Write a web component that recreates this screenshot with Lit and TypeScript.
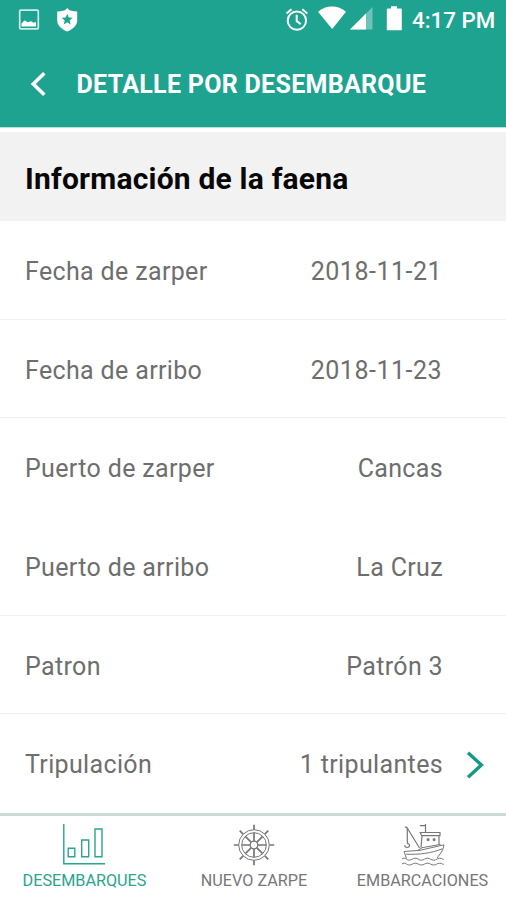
import { LitElement, html, css, svg, nothing } from "lit";
import { customElement } from "lit/decorators.js";
import { classMap } from "lit/directives/class-map.js";

interface Row { label: string; value: string; divider: boolean; link?: boolean; numeric?: boolean }

const rows: Row[] = [
  { label: "Fecha de zarper", value: "2018-11-21", divider: true, numeric: true },
  { label: "Fecha de arribo", value: "2018-11-23", divider: true, numeric: true },
  { label: "Puerto de zarper", value: "Cancas", divider: false },
  { label: "Puerto de arribo", value: "La Cruz", divider: true },
  { label: "Patron", value: "Patrón 3", divider: true },
  { label: "Tripulación", value: "1 tripulantes", divider: false, link: true },
];

@customElement("status-bar")
class StatusBar extends LitElement {
  static styles = css`
    :host { display: flex; align-items: center; height: 40px; padding: 0 12px 0 18px; color: #fff; }
    svg { display: block; flex: none; }
    .shield { margin-left: 17px; }
    .alarm { margin-left: auto; }
    .wifi { margin-left: 9px; }
    .signal { margin-left: 4px; }
    .battery { margin-left: 13px; }
    .time { margin-left: 9px; width: 82px; font: 500 22.3px/40px Roboto, sans-serif; white-space: nowrap; }
  `;
  render() {
    return html`
      <svg width="22" height="40" viewBox="18 0 22 40">
        <rect x="19.7" y="10.2" width="18.6" height="18.6" rx="1" fill="none" stroke="#fff" stroke-opacity=".8" stroke-width="1.7" />
        <path d="M21.5 26.5v-3l3-3.2 3.2 2 3.3-1.1 2.6 1.6 2.4-.8v4.5z" fill="#fff" />
      </svg>
      <svg class="shield" width="21" height="40" viewBox="57 0 21 40">
        <path fill-rule="evenodd" fill="#fff" d="M67.2 8l2.2 2.2 4.6 1 3.2.3v9.3c0 4.8-5 8.8-10 10.8-5-2-10-6-10-10.8v-9.3l3.4-.3 4.4-1zM67.2 13.8l-1.5 3.7-4 .3 3 2.6-.9 4 3.4-2.1 3.4 2.1-.9-4 3-2.6-4-.3z" />
      </svg>
      <svg class="alarm" width="24" height="40" viewBox="284.5 0 24 40">
        <g fill="none" stroke="#fff" stroke-width="2">
          <circle cx="296.4" cy="20.6" r="9.2" />
          <path d="M296.2 14.8v6.3l4 3M286 13.4l5-4.2M306.8 13.4l-5-4.2" />
        </g>
      </svg>
      <svg class="wifi" width="28" height="40" viewBox="317 0 28 40">
        <path fill="#fff" d="M317 11.8C325 4.7 337 4.7 345 11.8L331.2 29z" />
      </svg>
      <svg class="signal" width="23" height="40" viewBox="349 0 23 40">
        <path fill="#fff" fill-opacity=".35" d="M349 29.5L371.5 7v22.5z" />
        <path fill="#fff" d="M349 29.5L365 13.5v16z" />
      </svg>
      <svg class="battery" width="17" height="40" viewBox="385 0 17 40">
        <path fill="#fff" d="M390 6.3h6v2.3h3.8q1 0 1 1v20.6h-15V9.6q0-1 1-1H390z" />
      </svg>
      <span class="time">4:17 PM</span>
    `;
  }
}

@customElement("detail-row")
class DetailRow extends LitElement {
  static properties = { row: { attribute: false } };
  declare row: Row;
  static styles = css`
    :host { display: block; flex: 1; }
    .row {
      box-sizing: border-box; height: 100%; display: flex; align-items: center;
      padding: 4px 21px 0 25px; border-bottom: 1px solid transparent;
      font: 400 25px/30px Roboto, sans-serif; letter-spacing: 0.35px; color: #6e6e6e;
    }
    .divided { border-bottom-color: #f2f2f2; }
    .value { margin-left: auto; }
    .numeric { letter-spacing: 0.5px; padding-right: 1px; }
    .end { width: 42px; display: flex; justify-content: flex-end; }
  `;
  render() {
    const r = this.row;
    return html`<div class=${classMap({ row: true, divided: r.divider })}>
      <span>${r.label}</span><span class=${classMap({ value: true, numeric: !!r.numeric })}>${r.value}</span>
      <span class="end">${r.link
        ? html`<svg width="19" height="28" viewBox="0 0 19 28"><path d="M2 1.7L15.4 14 2 26.3" fill="none" stroke="#129a87" stroke-width="3.4" /></svg>`
        : nothing}</span>
    </div>`;
  }
}

const spokes = [0, 45, 90, 135, 180, 225, 270, 315];

const icons = {
  chart: svg`<path d="M.8 1v39.7H42" stroke-width="1.4" />
    <path d="M5.2 25.2h6.6v8.6H5.2zM18.7 17h7v16.8h-7zM32 6h7v27.8h-7z" stroke-width="1.4" />`,
  wheel: svg`<circle cx="22" cy="22" r="15.3" /><circle cx="22" cy="22" r="12.3" /><circle cx="22" cy="22" r="3.8" stroke-width="1.3" />
    ${spokes.map(a => svg`<path d="M22 1.8v4.9M22 9.7v8.5" stroke-width="1.7" transform="rotate(${a} 22 22)" />`)}`,
  boat: svg`<path d="M4 3.8l2.3 1.5v13M5.5 3.8L18.5 25M6.5 18v2.5c3 .5 2.5 4-.3 4-1.7 0-2.5-1-2.5-2.2" stroke-width="1.2" />
    <path d="M18.8 2.6h5.6M24.5 1v8M19.3 9.5H39v3.2H20.6zM21 12.7L20 24.5M38 12.7v9" stroke-width="1.2" />
    <path d="M3 28.5l16-1.2 24-5.5c-.5 5.5-3.8 9-7 13.2M3 28.5l2.5 7M5 31.2c13 .5 25-.8 36.5-5.5M17 27.4l4-2.7 18.5-3.3" />
    <path d="M26.2 15.8h1.8v1.8h-1.8zM32.2 15.8h1.8v1.8h-1.8z" fill="currentColor" />
    <path d="M1 36c3-2.5 4.5 1.2 7.2 1.2s3.3-2 6-2 3.5 2 6.2 2 3.4-2 6.1-2 3.5 2 6.2 2 3.4-2 6.1-2 2 1 4 1.2M1 41c3-2.5 4.5 1 7.2 1s3.3-1.8 6-1.8 3.5 1.8 6.2 1.8 3.4-1.8 6.1-1.8 3.5 1.8 6.2 1.8 3.4-1.8 6.1-1.8 2 1 4 1.2" />`,
};

@customElement("tab-bar")
class TabBar extends LitElement {
  static styles = css`
    :host { display: grid; grid-template-columns: 169px 170px 167px; box-sizing: border-box; height: 87px;
      border-top: 3px solid #cadbd5; background: #fff; }
    .tab { display: flex; flex-direction: column; align-items: center; padding-top: 7px; color: #777;
      font: 400 16.2px/20px Roboto, sans-serif; white-space: nowrap; }
    .active { color: #2aa58e; }
    svg { display: block; fill: none; stroke: currentColor; stroke-width: 1; margin-bottom: 4px; }
  `;
  render() {
    const tab = (label: string, icon: unknown, active = false) => html`
      <div class=${classMap({ tab: true, active })}>
        <svg width="44" height="44" viewBox="0 0 44 44">${icon}</svg><span>${label}</span>
      </div>`;
    return html`${tab("DESEMBARQUES", icons.chart, true)}${tab("NUEVO ZARPE", icons.wheel)}${tab("EMBARCACIONES", icons.boat)}`;
  }
}

@customElement("app-root")
class AppRoot extends LitElement {
  static styles = css`
    :host { display: flex; flex-direction: column; width: 506px; height: 900px; overflow: hidden; background: #fff;
      font-family: Roboto, sans-serif; }
    .top { height: 127px; background: #1fa391; box-shadow: 0 1px 0 #b9e0da; }
    .bar { display: flex; align-items: center; box-sizing: border-box; height: 87px; padding: 3px 0 0 30px; color: #fff; }
    .bar svg { margin-top: -2px; }
    .title { margin: 0 0 0 29.5px; font: 700 25px/30px Roboto, sans-serif; letter-spacing: 0.3px; white-space: nowrap; }
    .section { margin: 5px 0 0; height: 89px; background: #f2f2f2; padding: 2px 0 0 25px; box-sizing: border-box;
      font: 700 30px/90px Roboto, sans-serif; letter-spacing: 0.2px; color: #080808; }
    .rows { flex: 1; display: flex; flex-direction: column; }
  `;
  render() {
    return html`
      <header class="top">
        <status-bar></status-bar>
        <div class="bar">
          <svg width="17" height="26" viewBox="0 0 17 26"><path d="M14.3 2.3L3.3 13l11 10.7" fill="none" stroke="#fff" stroke-width="3.6" /></svg>
          <h1 class="title">DETALLE POR DESEMBARQUE</h1>
        </div>
      </header>
      <h2 class="section">Información de la faena</h2>
      <main class="rows">${rows.map(r => html`<detail-row .row=${r}></detail-row>`)}</main>
      <tab-bar></tab-bar>
    `;
  }
}
